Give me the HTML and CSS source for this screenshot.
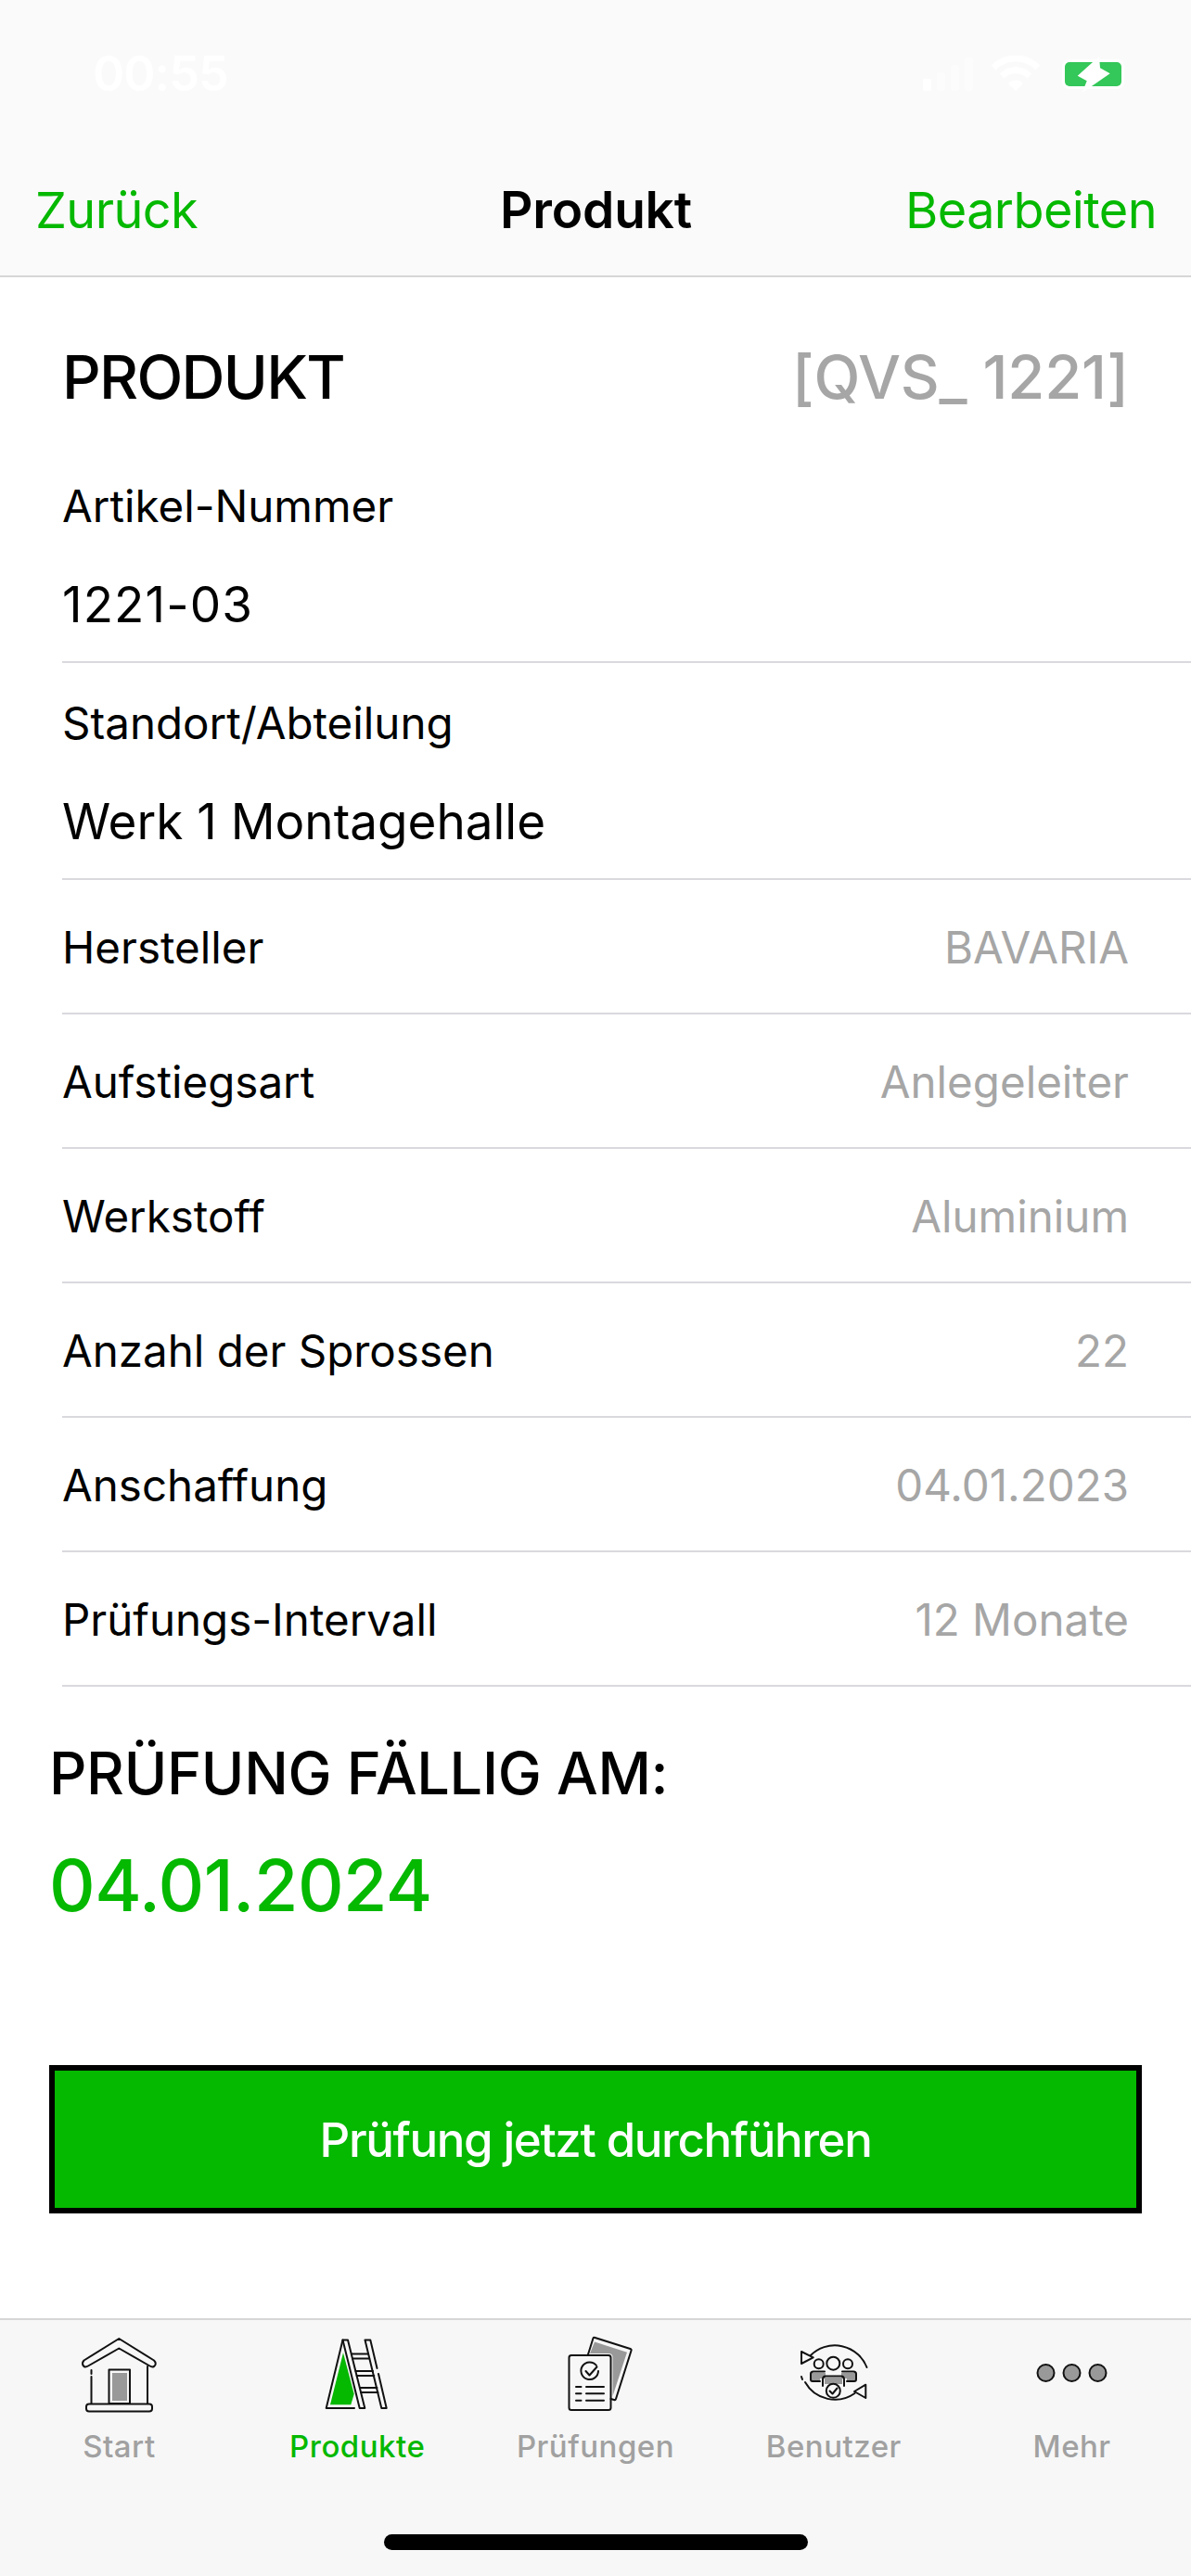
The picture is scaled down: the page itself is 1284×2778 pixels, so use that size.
FILE: index.html
```html
<!DOCTYPE html>
<html lang="de">
<head>
<meta charset="utf-8">
<title>Produkt</title>
<link rel="stylesheet" href="styles.css">
</head>
<body>
<div class="app">
  <header class="topbar">
    <div class="status">
      <span class="clock">00:55</span>
      <div class="status-icons">
        <svg class="signal" viewBox="0 0 54 36" width="54" height="36"><rect x="0" y="23" width="9" height="13" rx="2" fill="#fff"/><g fill="#fff" fill-opacity="0.35"><rect x="15" y="16" width="9" height="20" rx="2"/><rect x="30" y="8" width="9" height="28" rx="2"/><rect x="45" y="0" width="9" height="36" rx="2"/></g></svg>
        <svg class="wifi" viewBox="0 0 54 38" width="54" height="38"><g fill="none" stroke="#fff" stroke-width="7"><path d="M3 13 A34 34 0 0 1 51 13"/><path d="M12 22 A21 21 0 0 1 42 22"/></g><path d="M19 30 A11 11 0 0 1 35 30 L27 38 Z" fill="#fff"/></svg>
        <svg class="battery" viewBox="0 0 62 40" width="62" height="40"><rect x="-3" y="4" width="67" height="32" rx="8" fill="#fff"/><rect x="0" y="7" width="61" height="26" rx="5" fill="#34c759"/><path d="M37 0.7 L13.7 21.7 L23.7 27.3 L18.7 40 L48.7 19.3 L38 13.3 Z" fill="#fff"/></svg>
      </div>
    </div>
    <nav class="navrow">
      <a class="nav-link">Zurück</a>
      <h1 class="nav-title">Produkt</h1>
      <a class="nav-link nav-link-end">Bearbeiten</a>
    </nav>
  </header>

  <main class="content">
    <div class="head-row">
      <h2 class="head-title">PRODUKT</h2>
      <span class="head-code">[QVS_ 1221]</span>
    </div>
    <div class="stack first">
      <div class="stack-label">Artikel-Nummer</div>
      <div class="stack-value digits">1221-03</div>
    </div>
    <div class="stack">
      <div class="stack-label">Standort/Abteilung</div>
      <div class="stack-value">Werk 1 Montagehalle</div>
    </div>
    <div class="row"><span>Hersteller</span><span class="row-value">BAVARIA</span></div>
    <div class="row"><span>Aufstiegsart</span><span class="row-value">Anlegeleiter</span></div>
    <div class="row"><span>Werkstoff</span><span class="row-value">Aluminium</span></div>
    <div class="row"><span>Anzahl der Sprossen</span><span class="row-value">22</span></div>
    <div class="row"><span>Anschaffung</span><span class="row-value">04.01.2023</span></div>
    <div class="row"><span>Prüfungs-Intervall</span><span class="row-value">12 Monate</span></div>

    <section class="due">
      <div class="due-label">PRÜFUNG FÄLLIG AM:</div>
      <div class="due-date">04.01.2024</div>
    </section>
    <button class="cta" type="button">Prüfung jetzt durchführen</button>
  </main>

  <footer class="tabbar">
    <div class="tabs">
      <div class="tab">
        <svg class="tab-icon" viewBox="0 0 90 90" width="90" height="90">
          <rect x="38" y="42" width="16" height="30" fill="#999"/>
          <g fill="none" stroke="#111" stroke-width="2" stroke-linejoin="round" stroke-linecap="round">
            <path d="M45.3 5 L83 28.5 Q86.5 32 83 35 Q81 36 78.5 34.5 L45.3 15.5 L12 34.5 Q9.5 36 7.5 35 Q4.5 32 7.5 28.5 Z"/>
            <path d="M15.5 39 V43 M15.5 46 V75 M76 35 V75"/>
            <rect x="34.5" y="38.5" width="22.5" height="36.5"/>
            <rect x="10" y="75.5" width="71" height="8" rx="3"/>
          </g>
        </svg>
        <span class="tab-label">Start</span>
      </div>
      <div class="tab active">
        <svg class="tab-icon" viewBox="0 0 90 90" width="90" height="90">
          <path d="M30 20.3 L16 76.3 H38.3 L41.7 64.7 Z" fill="#05b800"/>
          <g fill="none" stroke="#111" stroke-width="2" stroke-linejoin="round" stroke-linecap="round">
            <path d="M29.5 6.5 L11.7 80 H42"/>
            <path d="M29.5 6.5 H35 L53.3 80 H47.7 Z"/>
            <path d="M53.5 6.5 H59.3 L66.5 37 M68 43 L76.7 80 H71.3 L53.5 6.5"/>
            <path d="M39 21.5 H57 M40.2 26.5 H58.2 M43.5 40 H62 M44.7 45 H63.3 M48 58 H66.5 M49 63 H67.5"/>
          </g>
        </svg>
        <span class="tab-label">Produkte</span>
      </div>
      <div class="tab">
        <svg class="tab-icon" viewBox="0 0 90 90" width="90" height="90">
          <path d="M44 8.5 L79 19.7 L63.5 67 V25 Q63.5 21 59 21 H39 Z" fill="#999"/>
          <g fill="none" stroke="#111" stroke-width="2" stroke-linejoin="round" stroke-linecap="round">
            <path d="M37 22 L42.5 4.5 Q43 3.5 44.5 4 L82.5 16 Q84 16.5 83.5 18 L67 70 Q66.5 71.5 65 71 L61.5 70"/>
            <rect x="16.5" y="23" width="45" height="59" rx="2.5"/>
            <path d="M46 34 A9.3 9.3 0 1 0 48 40"/>
            <path d="M34.5 40 L38.5 44.5 L46.5 35.5"/>
            <path d="M24 57 H29.5 M35 57 H54 M24 64.3 H29.5 M35 64.3 H54 M24 71.7 H29.5 M35 71.7 H54"/>
          </g>
        </svg>
        <span class="tab-label">Prüfungen</span>
      </div>
      <div class="tab">
        <svg class="tab-icon" viewBox="0 0 90 90" width="90" height="90">
          <g fill="#999">
            <path d="M20 42 H36 V48 H30 V51 H20 Z"/>
            <path d="M53 42 H69 V51 H59 V48 H53 Z"/>
            <path d="M35 47 H54 V54 H35 Z"/>
          </g>
          <g fill="none" stroke="#111" stroke-width="2" stroke-linejoin="round" stroke-linecap="round">
            <path d="M20 23 A37 37 0 0 1 80.5 36"/>
            <path d="M10 19 L22.7 25.3 L10 32 Z"/>
            <path d="M67.5 64 A37 37 0 0 1 14 52 M10 46 L11 49"/>
            <path d="M79.3 54.7 L67 62 L79.3 69 Z"/>
            <circle cx="28.7" cy="32.3" r="5"/>
            <circle cx="44.3" cy="31.7" r="7"/>
            <circle cx="60" cy="32.3" r="5"/>
            <path d="M30 51 H22 Q20 51 20 49 V43 Q20 40.5 23 40.5 H35 M59 51 H67 Q69 51 69 49 V43 Q69 40.5 66 40.5 H54"/>
            <path d="M33 56 V49 Q33 45.5 36 45.5 H53 Q56 45.5 56 49 V56"/>
            <circle cx="44.3" cy="61.3" r="7.5"/>
            <path d="M40.5 61.5 L43.5 64.5 L48.5 58.5"/>
          </g>
        </svg>
        <span class="tab-label">Benutzer</span>
      </div>
      <div class="tab">
        <svg class="tab-icon" viewBox="0 0 90 90" width="90" height="90">
          <g fill="#999" stroke="#111" stroke-width="2">
            <circle cx="16.5" cy="42" r="9"/>
            <circle cx="44.5" cy="42" r="9"/>
            <circle cx="72.5" cy="42" r="9"/>
          </g>
        </svg>
        <span class="tab-label">Mehr</span>
      </div>
    </div>
    <div class="home-indicator"></div>
  </footer>
</div>
</body>
</html>
```

FILE: styles.css
```css
* { box-sizing: border-box; margin: 0; padding: 0; }

html, body { background: #fff; }

body {
  font-family: Inter, "Liberation Sans", sans-serif;
  color: #000;
}

.app {
  width: 1284px;
  height: 2778px;
  display: flex;
  flex-direction: column;
  overflow: hidden;
}

/* Top bar: status line and navigation */
.topbar {
  height: 299px;
  flex: none;
  background: #fafafa;
  border-bottom: 2px solid #d6d6d6;
}

.status {
  height: 159px;
  padding: 52px 74px 0 100px;
  display: flex;
  justify-content: space-between;
  align-items: flex-start;
}

.clock {
  color: #fff;
  font-size: 52px;
  line-height: 56px;
  font-weight: 600;
  letter-spacing: -1px;
}

.status-icons {
  display: flex;
  align-items: flex-start;
  padding-top: 8px;
}

.signal { margin-top: 2px; margin-right: 19px; }
.wifi { margin-right: 26px; }
.battery { overflow: visible; }

.navrow {
  display: grid;
  grid-template-columns: 1fr auto 1fr;
  align-items: center;
  padding: 0 37px 0 38px;
  height: 134px;
}

.nav-link {
  color: #05b800;
  font-size: 54px;
  letter-spacing: -0.6px;
}

.nav-link-end { text-align: right; }

.nav-title {
  font-size: 55px;
  font-weight: 600;
  letter-spacing: -0.2px;
}

/* Product details */
.content {
  flex: 1;
  display: flex;
  flex-direction: column;
}

.head-row {
  height: 128px;
  padding: 67px 67px 0;
  display: flex;
  justify-content: space-between;
  align-items: flex-start;
}

.head-title {
  font-size: 65px;
  line-height: 82px;
  font-weight: 500;
  letter-spacing: -1.7px;
}

.head-code {
  font-size: 65px;
  line-height: 82px;
  font-weight: 500;
  color: #a6a6a6;
  letter-spacing: -0.2px;
}

.stack,
.row {
  margin-left: 67px;
  border-bottom: 2px solid #d9d9de;
  font-size: 47.5px;
}

.stack { height: 234px; padding-top: 35px; }

.stack.first {
  height: 288px;
  padding-top: 0;
  display: flex;
  flex-direction: column;
  justify-content: flex-end;
  padding-bottom: 29px;
}

.stack-label { line-height: 60px; }

.stack-value {
  font-size: 53px;
  line-height: 64px;
  margin-top: 44px;
}

.stack-value.digits { letter-spacing: 1.1px; }

.row {
  height: 145px;
  padding-right: 67px;
  padding-top: 2px;
  display: flex;
  justify-content: space-between;
  align-items: center;
}

.row-value { color: #a6a6a6; }

/* Due date and action */
.due { padding: 53px 53px 0; }

.due-label {
  font-size: 63px;
  line-height: 80px;
  font-weight: 500;
  letter-spacing: -0.3px;
}

.due-date {
  margin-top: 36px;
  font-size: 77px;
  line-height: 90px;
  font-weight: 500;
  color: #05b800;
  letter-spacing: -0.5px;
}

.cta {
  margin: 149px 53px 0;
  height: 160px;
  background: #05b800;
  border: 6px solid #000;
  color: #fff;
  font-family: inherit;
  font-size: 51px;
  font-weight: 500;
  letter-spacing: -1.4px;
}

/* Bottom tab bar */
.tabbar {
  margin-top: auto;
  height: 278px;
  flex: none;
  background: #f7f7f7;
  border-top: 2px solid #d6d6d6;
}

.tabs {
  display: grid;
  grid-template-columns: repeat(5, 1fr);
  padding-top: 15px;
}

.tab {
  display: flex;
  flex-direction: column;
  align-items: center;
  color: #a1a1a1;
  font-size: 33px;
}

.tab.active { color: #05b800; }

.tab-label {
  line-height: 40px;
  margin-top: 11px;
  letter-spacing: 0.5px;
  font-weight: 500;
}

.home-indicator {
  width: 457px;
  height: 17px;
  margin: 75px auto 0;
  background: #000;
  border-radius: 9px;
}
```
